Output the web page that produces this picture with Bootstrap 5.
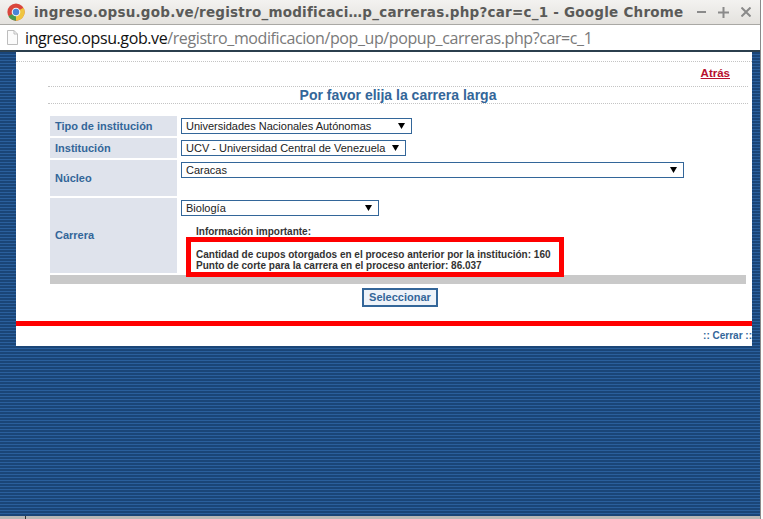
<!DOCTYPE html>
<html lang="es">
<head>
<meta charset="utf-8">
<title>Carreras</title>
<link href="https://cdn.jsdelivr.net/npm/bootstrap@5.3.0/dist/css/bootstrap.min.css" rel="stylesheet">
<style>
html,body{height:519px;overflow:hidden}
body{background:#fdfdfd;font-family:"Liberation Sans",Arial,sans-serif;color:#333}
.win{height:519px;width:761px;border-right:1px solid #8a8a8a}
.titlebar{height:25px;background:linear-gradient(#f3f2f0,#e4e2de);border-bottom:1px solid #a9a8a4;padding-left:7px}
.titletext{font-family:"DejaVu Sans",sans-serif;font-weight:700;font-size:13.5px;color:#5a5a58;margin-left:9px;white-space:nowrap;letter-spacing:.23px}
.winbtns{margin-left:auto;margin-right:9px;gap:12px}
.addrbar{height:27px;background:#fff;border-bottom:2px solid #2b3f4d;padding-left:7px}
.addrtext{font-family:"Open Sans",sans-serif;font-size:16px;margin-left:7px;color:#7a7a7a;white-space:nowrap;letter-spacing:-.4px}
.addrtext b{font-weight:400;color:#111}
.stage{height:464px;background:repeating-linear-gradient(#1a4577 0 2px,#2a5f9c 2px 3px);padding-left:16px}
.sheet{width:736px;height:294px;background:#fff}
.dotline{border-top:1px dotted #c4c4c4}
.toprule{height:9px}
.backrow{height:25px;margin:0 4px 0 32px;border-bottom:1px dotted #c4c4c4;padding:4px 18px 0 0;font-size:11.5px;font-weight:700;text-align:right;line-height:14px}
.backrow a{color:#b70f2e}
.heading{height:17px;margin:0 4px 0 32px;border-bottom:1px dotted #c4c4c4;color:#336699;font-size:14px;font-weight:700;line-height:17px;text-align:center}
.formtable{margin:12px 6px 0 34px;gap:2px}
.frow{gap:4px}
.flabel{width:127px;background:#dfe3ec;color:#336699;font-size:11px;font-weight:700;padding-left:5px}
.fcell{flex:1}
.h20{height:20px}.h36{height:36px}.h75{height:75px}
.pick.form-select{font-size:11px;font-family:"Liberation Sans",Arial,sans-serif;line-height:14px;height:16px;border:1px solid #336699;border-radius:0;padding:0 0 0 4px;margin-top:2px;color:#222;background-color:#fff;box-shadow:none;background-image:url("data:image/svg+xml,%3Csvg xmlns='http://www.w3.org/2000/svg' width='7' height='6'%3E%3Cpath d='M0 0h7L3.500 6z' fill='%23000'/%3E%3C/svg%3E");background-size:7px 6px;background-position:right 6px center;background-repeat:no-repeat}
.w230{width:231px}.w225{width:225px}.w503{width:503px}.w198{width:198px}
.infobox{width:378px;height:40px;border:5px solid #f00;margin:21px 0 0 5px;padding:7px 0 0 5px;font-size:10px;font-weight:700;line-height:11px;color:#333;white-space:nowrap;position:relative;z-index:1;background:#fff}
.infohead{position:absolute;left:5px;top:-16px;font-size:10px;font-weight:700;line-height:11px}
.graybar{height:9px;background:#c9c9c9;margin:2px 6px 0 34px}
.selwrap{margin-top:4px;padding-left:32px}
.pickbtn{width:76px;height:19px;border:2px solid #336699;border-radius:0;background:#eef3f9;color:#336699;font-weight:700;font-size:11px;line-height:13px;padding:0}
.redline{height:5px;background:#f00;margin-top:14px}
.footrow{height:20px;font-size:10px;font-weight:700;color:#336699;text-align:right;line-height:19px}
.statusstrip{height:3px;background:#b8b8b6;padding-left:25px}
.statustick{width:1px;height:3px;background:#333}
</style>
</head>
<body>
<div class="win">
  <div class="titlebar d-flex align-items-center">
    <svg width="18" height="18" viewBox="0 0 48 48" aria-hidden="true">
      <circle cx="24" cy="24" r="23" fill="#d9463c"/>
      <path d="M24 24 4 35.500A23 23 0 0 0 24 47z" fill="#4a9a4b"/>
      <path d="M24 24 44 12.500A23 23 0 0 1 24 47z" fill="#efc53f"/>
      <circle cx="24" cy="24" r="11.500" fill="#f5f5f5"/>
      <circle cx="24" cy="24" r="8.500" fill="#4a84d6"/>
    </svg>
    <span class="titletext">ingreso.opsu.gob.ve/registro_modificaci…p_carreras.php?car=c_1 - Google Chrome</span>
    <span class="winbtns d-flex align-items-center">
      <svg width="9" height="10" viewBox="0 0 9 10" aria-hidden="true"><path d="M0 5h9" stroke="#8a8a8a" stroke-width="2"/></svg>
      <svg width="11" height="11" viewBox="0 0 11 11" aria-hidden="true"><path d="M0 5.500h11M5.500 0v11" stroke="#8a8a8a" stroke-width="2"/></svg>
      <svg width="10" height="10" viewBox="0 0 10 10" aria-hidden="true"><path d="M.5.500l9 9M9.500.500l-9 9" stroke="#8a8a8a" stroke-width="2"/></svg>
    </span>
  </div>
  <div class="addrbar d-flex align-items-center">
    <svg width="11" height="15" viewBox="0 0 11 15" aria-hidden="true"><path d="M.5.5h6.500l3.500 3.500v10.500h-10z" fill="#fbfbfb" stroke="#bdbdbd"/><path d="M7 .5v3.500h3.500" fill="none" stroke="#bdbdbd"/></svg>
    <span class="addrtext"><b>ingreso.opsu.gob.ve</b>/registro_modificacion/pop_up/popup_carreras.php?car=c_1</span>
  </div>
  <div class="stage">
    <div class="sheet">
      <div class="toprule"></div>
      <div class="dotline"></div>
      <div class="backrow"><a href="#">Atrás</a></div>
      <div class="heading">Por favor elija la carrera larga</div>
      <div class="formtable d-flex flex-column">
        <div class="frow d-flex h20">
          <div class="flabel d-flex align-items-center">Tipo de institución</div>
          <div class="fcell"><select class="pick form-select w230"><option>Universidades Nacionales Autónomas</option></select></div>
        </div>
        <div class="frow d-flex h20">
          <div class="flabel d-flex align-items-center">Institución</div>
          <div class="fcell"><select class="pick form-select w225"><option>UCV - Universidad Central de Venezuela</option></select></div>
        </div>
        <div class="frow d-flex h36">
          <div class="flabel d-flex align-items-center">Núcleo</div>
          <div class="fcell"><select class="pick form-select w503"><option>Caracas</option></select></div>
        </div>
        <div class="frow d-flex h75">
          <div class="flabel d-flex align-items-center">Carrera</div>
          <div class="fcell">
            <select class="pick form-select w198"><option>Biología</option></select>
            <div class="infobox">
              <div class="infohead">Información importante:</div>
              Cantidad de cupos otorgados en el proceso anterior por la institución: 160<br>
              Punto de corte para la carrera en el proceso anterior: 86.037
            </div>
          </div>
        </div>
      </div>
      <div class="graybar"></div>
      <div class="selwrap d-flex justify-content-center"><button type="button" class="btn pickbtn">Seleccionar</button></div>
      <div class="redline"></div>
      <div class="footrow">:: Cerrar ::</div>
    </div>
  </div>
  <div class="statusstrip"><div class="statustick"></div></div>
</div>
</body>
</html>
